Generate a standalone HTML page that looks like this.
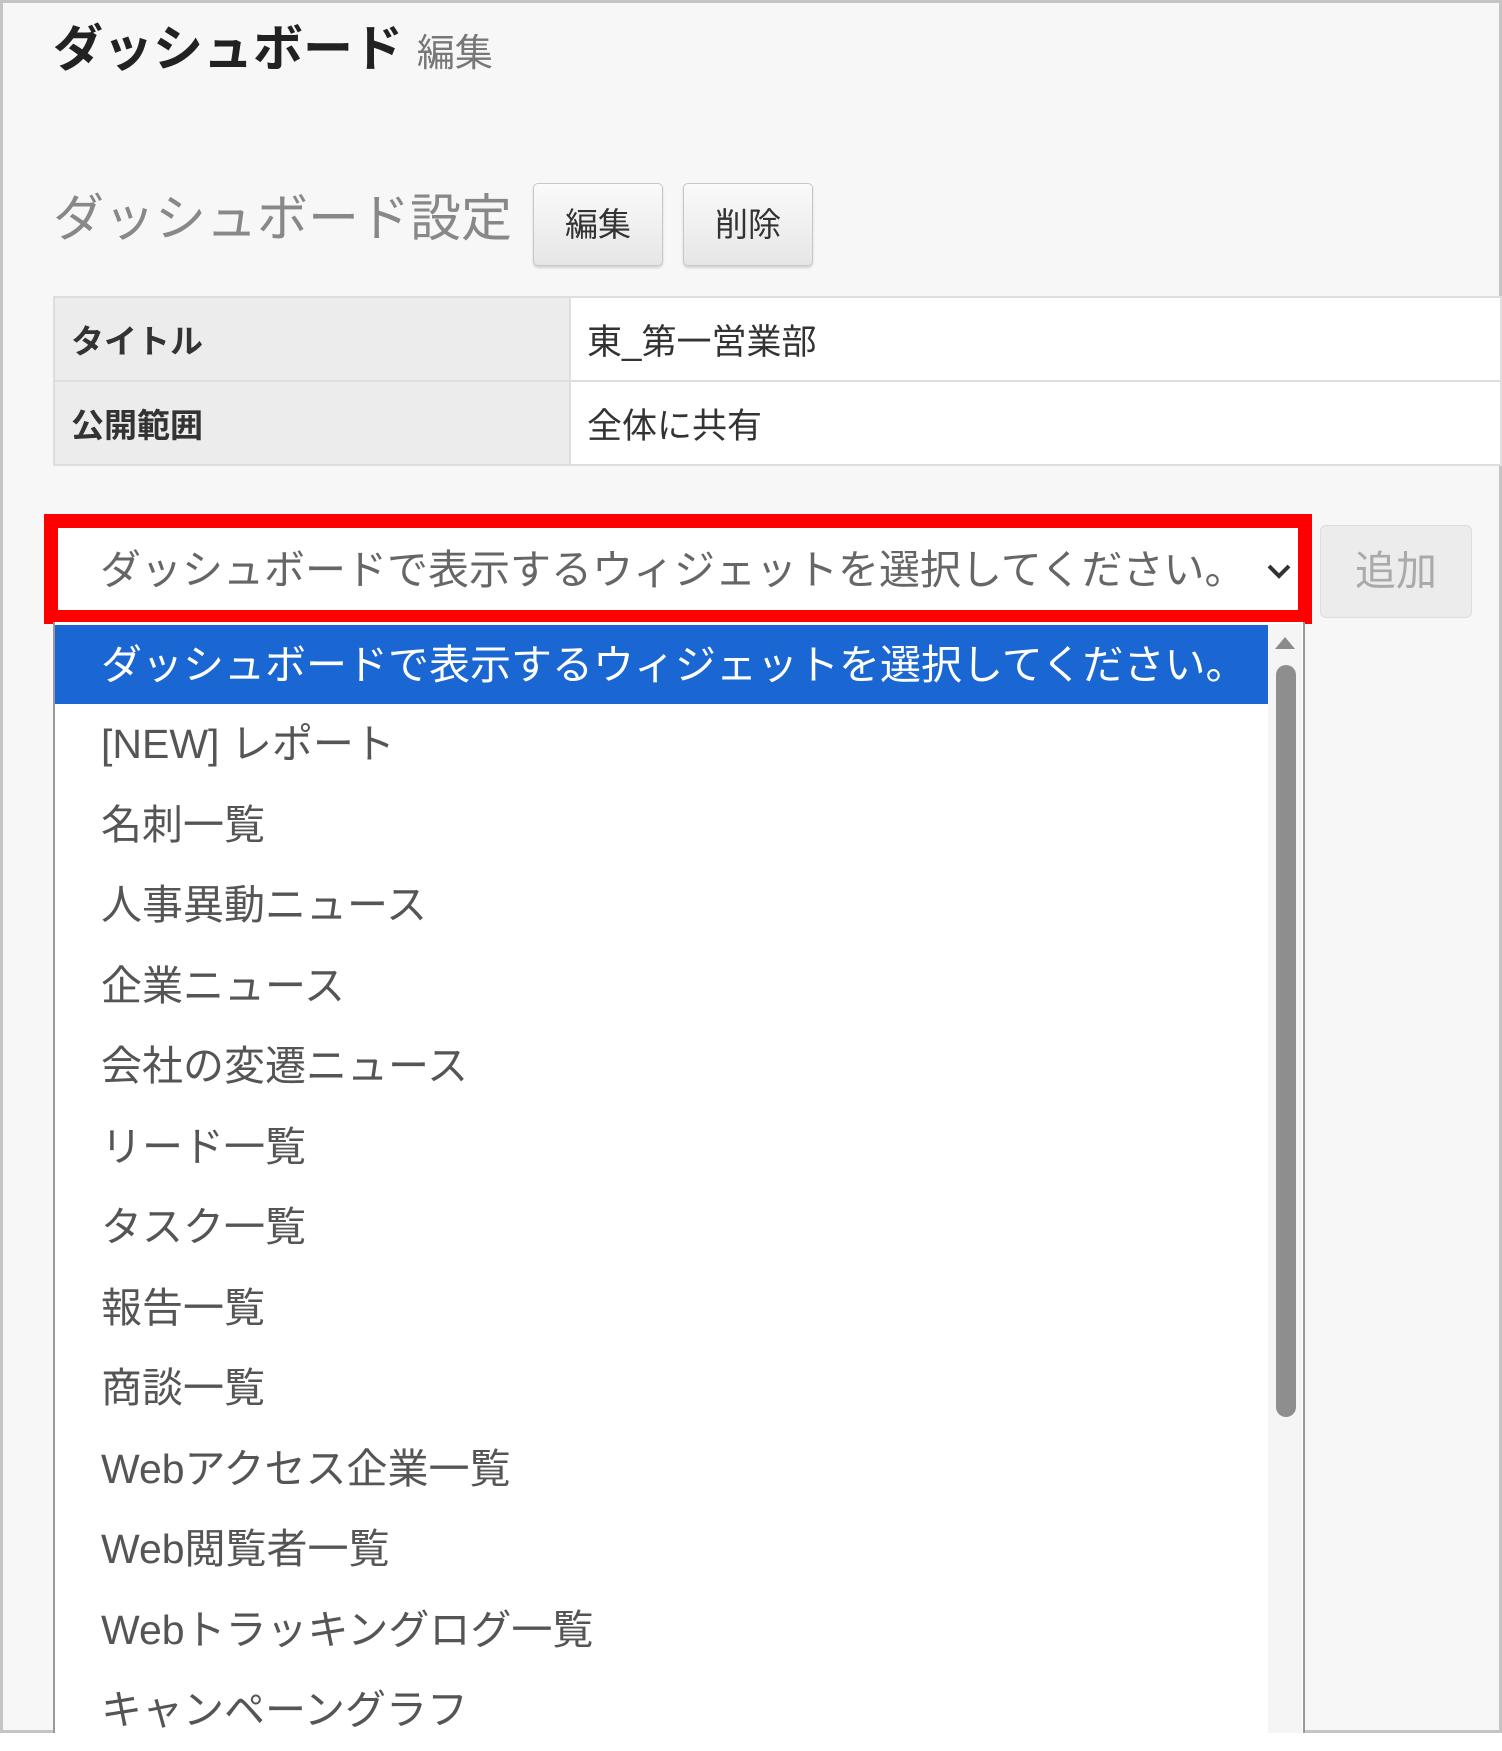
<!DOCTYPE html>
<html><head><meta charset="utf-8"><style>
*{margin:0;padding:0;box-sizing:border-box}
body{width:1502px;height:1733px;background:#fff;font-family:"Liberation Sans","Noto Sans CJK JP",sans-serif;overflow:hidden;position:relative}
.frame{position:absolute;left:0;top:0;width:1502px;height:1733px;background:#f7f7f7;border:3px solid #c4c4c4}
.abs{position:absolute;white-space:nowrap}
.btn{position:absolute;top:183px;height:83px;width:130px;border:1px solid #c8c8c8;border-radius:5px;background:linear-gradient(#fafafa,#e6e6e6);box-shadow:0 2px 2px rgba(0,0,0,.15);font-size:33px;color:#333;text-align:center;line-height:81px}
table{position:absolute;left:53px;top:296px;width:1449px;border-collapse:collapse}
td{height:84px;border:2px solid #dedede;font-size:35px;padding-left:16px;color:#333}
td.h{background:#ececec;font-weight:bold;width:516px;font-size:33px}
td.v{background:#fff}
.list{position:absolute;left:53px;top:622px;width:1252px;height:1111px;background:#fff;border-left:2px solid #999;border-right:2px solid #999}
.item{height:80.5px;line-height:80px;font-size:41px;color:#555;padding-left:46px;width:1216px}
.sel{background:#1a66d2;color:#fff}
</style></head><body>
<div class="frame"></div>
<div class="abs" style="left:53px;top:14px;font-size:50px;font-weight:bold;color:#222;line-height:70px">ダッシュボード <span style="font-size:38px;font-weight:normal;color:#777">編集</span></div>
<div class="abs" style="left:53px;top:186px;font-size:51px;color:#888;line-height:66px">ダッシュボード設定</div>
<div class="btn" style="left:533px">編集</div>
<div class="btn" style="left:683px">削除</div>
<table><tr><td class="h">タイトル</td><td class="v">東_第一営業部</td></tr><tr><td class="h">公開範囲</td><td class="v">全体に共有</td></tr></table>
<div class="abs" style="left:44px;top:514px;width:1268px;height:110px;border:14px solid #f00;background:#fff"></div>
<div class="abs" style="left:100px;top:540px;font-size:41px;color:#666;line-height:60px">ダッシュボードで表示するウィジェットを選択してください。</div>
<svg class="abs" style="left:1266px;top:562px" width="26" height="18"><path d="M3 4 L13 14 L23 4" fill="none" stroke="#333" stroke-width="4"/></svg>
<div class="abs" style="left:1320px;top:525px;width:152px;height:93px;border:1px solid #ddd;border-radius:6px;background:#ececec;color:#aaa;font-size:41px;text-align:center;line-height:90px">追加</div>
<div class="list">
<div class="item sel" style="margin-top:3px;height:79px">ダッシュボードで表示するウィジェットを選択してください。</div>
<div class="item">[NEW] レポート</div>
<div class="item">名刺一覧</div>
<div class="item">人事異動ニュース</div>
<div class="item">企業ニュース</div>
<div class="item">会社の変遷ニュース</div>
<div class="item">リード一覧</div>
<div class="item">タスク一覧</div>
<div class="item">報告一覧</div>
<div class="item">商談一覧</div>
<div class="item">Webアクセス企業一覧</div>
<div class="item">Web閲覧者一覧</div>
<div class="item">Webトラッキングログ一覧</div>
<div class="item">キャンペーングラフ</div>
</div>
<div class="abs" style="left:1268px;top:624px;width:34px;height:1109px;background:#f5f5f5"></div>
<svg class="abs" style="left:1274px;top:636px" width="22" height="14"><path d="M11 1 L21 13 L1 13 Z" fill="#8a8a8a"/></svg>
<div class="abs" style="left:1276px;top:665px;width:20px;height:752px;background:#8e8e8e;border-radius:10px"></div>
</body></html>
